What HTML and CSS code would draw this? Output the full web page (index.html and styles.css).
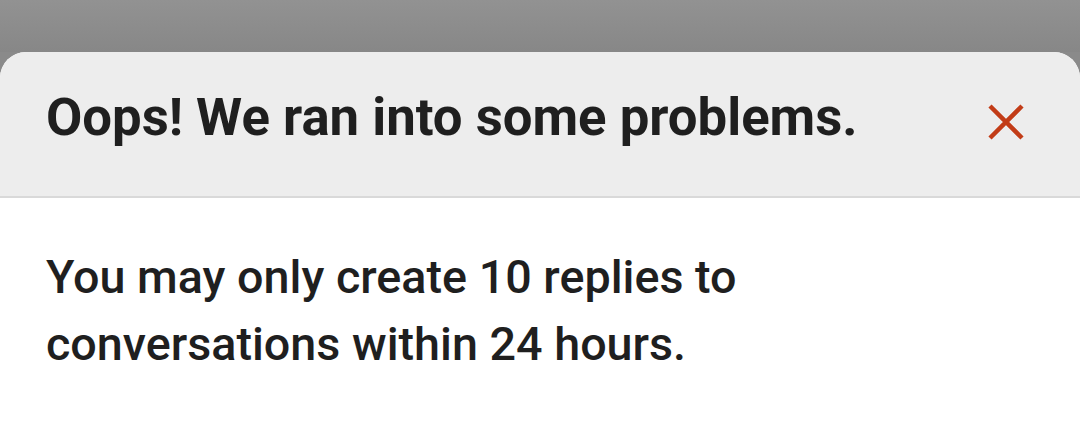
FILE: index.html
```html
<!DOCTYPE html>
<html>
<head>
<meta charset="utf-8">
<link rel="stylesheet" href="styles.css">
</head>
<body>
<div class="backdrop"></div>
<div class="sheet">
  <div class="sheet-header">
    <h1 class="title">Oops! We ran into some problems.</h1>
    <button class="close" aria-label="Close">
      <svg width="36" height="36" viewBox="0 0 36 36"><path d="M2 2 L34 34 M34 2 L2 34" stroke="#c23c17" stroke-width="4.5" stroke-linecap="butt" fill="none"/></svg>
    </button>
  </div>
  <div class="sheet-body">
    <p class="message">You may only create 10 replies to<br>conversations within 24 hours.</p>
  </div>
</div>
</body>
</html>
```
FILE: styles.css
```css
html, body {
  margin: 0;
  padding: 0;
  width: 1080px;
  height: 421px;
  overflow: hidden;
  background: #8a8a8a;
  font-family: Roboto, "Liberation Sans", sans-serif;
}
.backdrop {
  height: 52px;
  background: linear-gradient(#929292, #878787);
}
.sheet {
  background: #ffffff;
  border-radius: 26px 26px 0 0;
  overflow: hidden;
  height: 369px;
}
.sheet-header {
  background: #ededed;
  height: 144px;
  border-bottom: 2px solid #d9d9d9;
  display: flex;
  align-items: center;
  justify-content: space-between;
  padding: 0 56px 0 46px;
}
.title {
  margin: 0 0 14px 0;
  font-size: 52.7px;
  font-weight: 700;
  color: #1f1f1f;
  letter-spacing: 0;
}
.close {
  background: none;
  border: 0;
  padding: 0;
  margin-bottom: 4px;
  width: 36px;
  height: 36px;
  display: flex;
}
.sheet-body {
  padding: 46px 46px;
}
.message {
  margin: 0;
  font-size: 46.7px;
  font-weight: 500;
  line-height: 67px;
  color: #1f1f1f;
}
```
